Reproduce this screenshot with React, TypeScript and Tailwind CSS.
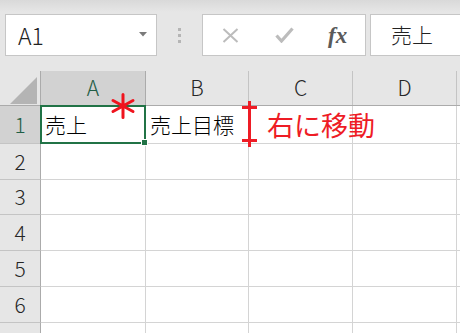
import React from "react";

const cols = [
  { name: "A", w: "w-[105px]", selected: true },
  { name: "B", w: "w-[103px]", selected: false },
  { name: "C", w: "w-[104px]", selected: false },
  { name: "D", w: "w-[104px]", selected: false },
];

const rows = [
  { n: 1, h: "h-[38px]", selected: true, cells: ["売上", "売上目標", "", ""] },
  { n: 2, h: "h-[36px]", selected: false, cells: ["", "", "", ""] },
  { n: 3, h: "h-[35px]", selected: false, cells: ["", "", "", ""] },
  { n: 4, h: "h-[36px]", selected: false, cells: ["", "", "", ""] },
  { n: 5, h: "h-[36px]", selected: false, cells: ["", "", "", ""] },
  { n: 6, h: "h-[36px]", selected: false, cells: ["", "", "", ""] },
  { n: 7, h: "h-[36px]", selected: false, cells: ["", "", "", ""] },
];

function Toolbar() {
  return (
    <div className="flex h-[71px] items-start bg-[linear-gradient(#d9d9d9,#e6e6e6_12px)] pt-[14px]">
      <div className="relative ml-[5px] flex h-[42px] w-[152px] items-center border border-[#c6c6c6] bg-white pl-[12px] text-[23px] text-[#222]">
        A1
        <svg className="absolute right-[9px] top-[17px]" width="8" height="5" viewBox="0 0 8 5">
          <path d="M0 0h8L4 4.5z" fill="#7a7a7a" />
        </svg>
      </div>
      <div className="flex h-[42px] w-[45px] flex-col items-center justify-center gap-[3px]">
        <span className="h-[3px] w-[3px] bg-[#b5b5b5]" />
        <span className="h-[3px] w-[3px] bg-[#b5b5b5]" />
        <span className="h-[3px] w-[3px] bg-[#b5b5b5]" />
      </div>
      <div className="flex h-[42px] w-[164px] items-center border border-[#c6c6c6] bg-white">
        <svg className="ml-[19px]" width="17" height="15" viewBox="0 0 17 15">
          <path d="M1.5 1l14 13M15.5 1l-14 13" stroke="#bcbcbc" strokeWidth="2" />
        </svg>
        <svg className="ml-[36px]" width="19" height="16" viewBox="0 0 19 16">
          <path d="M1.5 8.5l5 5.5L17.5 1.5" stroke="#bcbcbc" strokeWidth="3.2" fill="none" />
        </svg>
        <span className="ml-[34px] font-['Liberation_Serif',serif] text-[23px] font-bold italic leading-none text-[#5a5a5a]">
          fx
        </span>
      </div>
      <div className="ml-[4px] flex h-[42px] flex-1 items-center border border-r-0 border-[#c6c6c6] bg-white pl-[20px] text-[21px] text-[#222]">
        売上
      </div>
    </div>
  );
}

function HeaderRow() {
  return (
    <div className="flex h-[35px] border-b border-[#ababab] bg-[#e6e6e6]">
      <div className="relative w-[41px] border-r border-[#ababab]">
        <svg className="absolute left-[10px] top-[6px]" width="27" height="27" viewBox="0 0 27 27">
          <path d="M27 0V27H0z" fill="#b4b4b4" />
        </svg>
      </div>
      {cols.map((c) => (
        <div
          key={c.name}
          className={
            c.selected
              ? `${c.w} flex items-center justify-center border-r border-[#ababab] bg-[#d2d2d2] text-[21px] text-[#1f5e46]`
              : `${c.w} flex items-center justify-center border-r border-[#c4c4c4] text-[21px] text-[#262626]`
          }
        >
          {c.name}
        </div>
      ))}
      <div className="flex-1" />
    </div>
  );
}

function Row({ row }: { row: (typeof rows)[number] }) {
  return (
    <div className={`flex ${row.h}`}>
      <div
        className={
          row.selected
            ? "flex w-[41px] items-center justify-center border-r border-b border-r-[#ababab] border-b-[#c4c4c4] bg-[#d2d2d2] text-[21px] text-[#1f5e46]"
            : "flex w-[41px] items-center justify-center border-r border-b border-r-[#ababab] border-b-[#c4c4c4] bg-[#e6e6e6] text-[21px] text-[#262626]"
        }
      >
        {row.n}
      </div>
      {cols.map((c, i) => (
        <div
          key={c.name}
          className={`${c.w} flex items-center overflow-visible whitespace-nowrap border-r border-b border-[#d4d4d4] pl-[4px] text-[21px] text-black`}
        >
          {row.cells[i]}
        </div>
      ))}
      <div className="flex-1 border-b border-[#d4d4d4]" />
    </div>
  );
}

export default function App() {
  return (
    <div className="relative h-[333px] w-[460px] overflow-hidden bg-white font-['Noto_Sans_CJK_JP','Noto_Sans',sans-serif] font-light">
      <Toolbar />
      <HeaderRow />
      {rows.map((r) => (
        <Row key={r.n} row={r} />
      ))}

      {/* selected cell */}
      <div className="absolute left-[40px] top-[105px] h-[39px] w-[106px] border-[2.5px] border-[#217346]" />
      <div className="absolute left-[141px] top-[139px] h-[7px] w-[7px] border border-white bg-[#217346]" />

      {/* annotations */}
      <svg className="absolute left-[110px] top-[93px]" width="26" height="26" viewBox="0 0 26 26">
        <path
          d="M13 1.5v23M3 7.5l20 11M23 7.5L3 18.5"
          stroke="#f0141e"
          strokeWidth="3"
          strokeLinecap="round"
        />
      </svg>
      <svg className="absolute left-[241px] top-[101px]" width="17" height="46" viewBox="0 0 17 46">
        <path d="M8.5 0v46M1 6.5h15M1 39.5h15" stroke="#ee1c25" strokeWidth="3" />
      </svg>
      <div className="absolute left-[267px] top-[108px] text-[27px] font-normal leading-[34px] text-[#ee1c25]">
        右に移動
      </div>
    </div>
  );
}
